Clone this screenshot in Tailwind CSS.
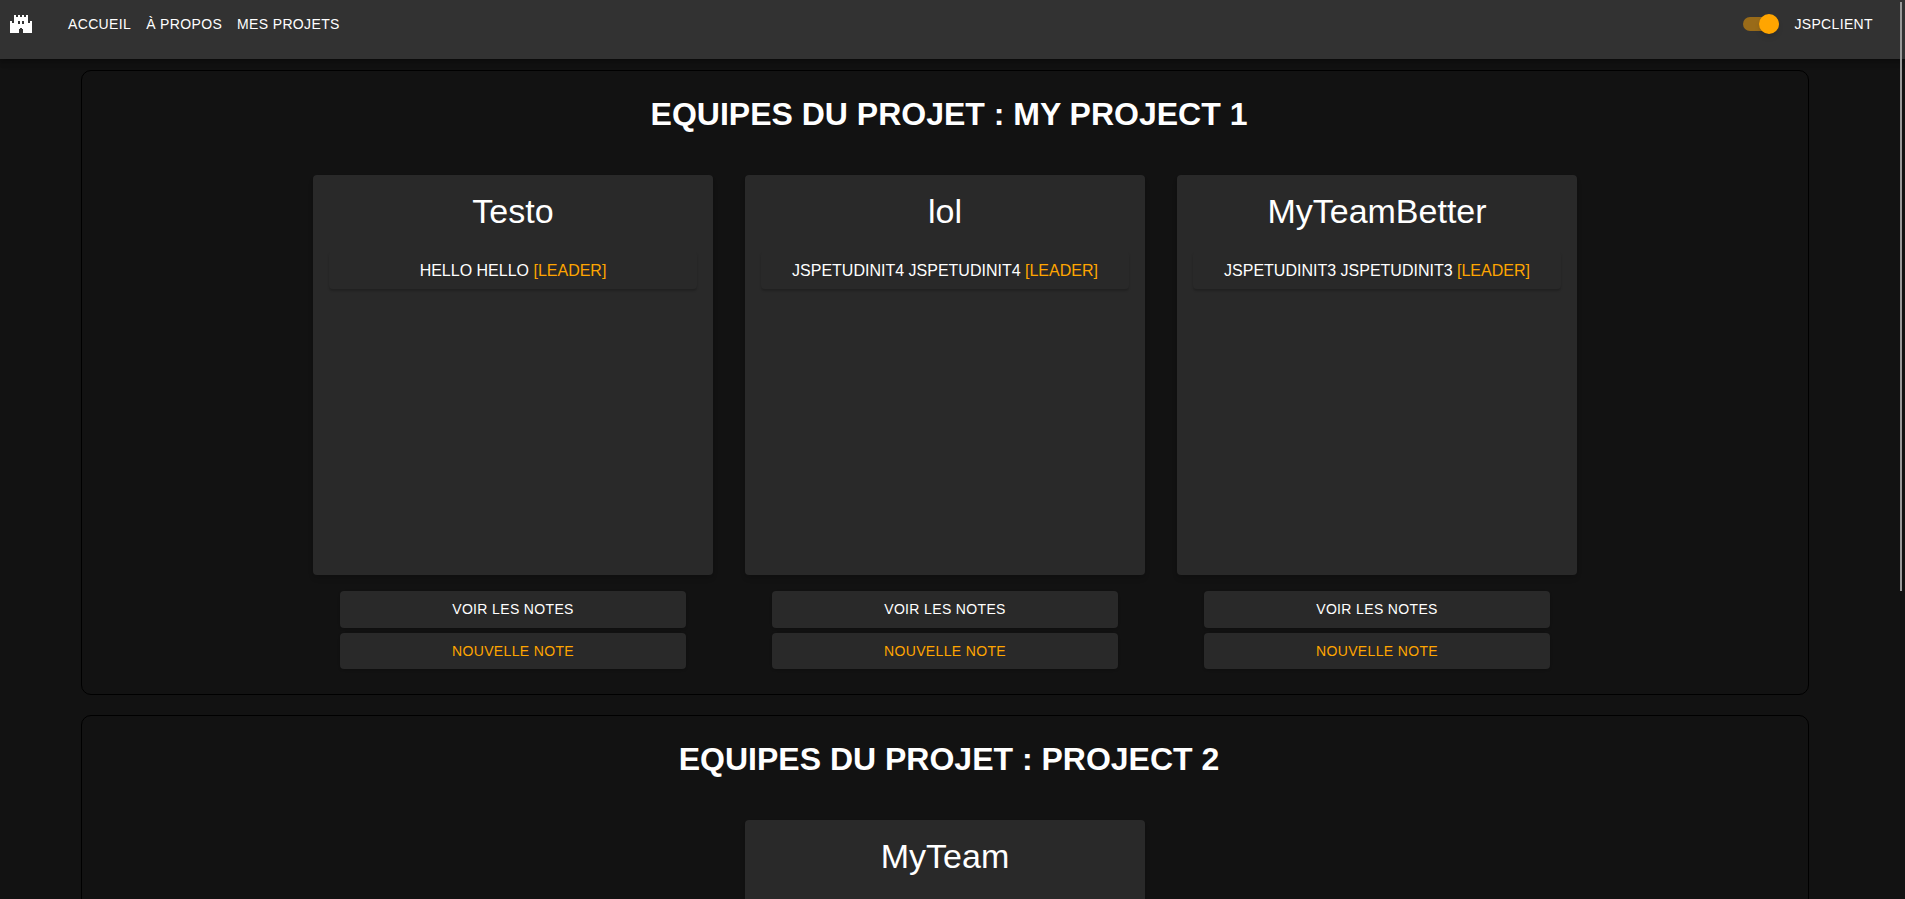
<!DOCTYPE html>
<html lang="fr">
<head>
<meta charset="utf-8">
<title>Mes projets</title>
<script src="https://cdn.jsdelivr.net/npm/@tailwindcss/browser@4"></script>
</head>
<body class="h-screen overflow-hidden bg-[#121212] font-['Liberation_Sans',Arial,sans-serif] text-white">
<header class="relative flex h-[59px] items-start bg-[#323232] pt-2 pr-8 pl-2 text-sm tracking-wide shadow-[0_2px_4px_-1px_rgba(0,0,0,0.2),0_4px_5px_rgba(0,0,0,0.14),0_1px_10px_rgba(0,0,0,0.12)]">
  <a href="#" aria-label="Accueil" class="flex h-8 items-center">
    <svg class="size-6" viewBox="0 0 24 24" fill="#fff" fill-rule="evenodd" shape-rendering="crispEdges"><path d="M2 9h2v2h2V3h2v2h2V3h2v2h2V3h2v2h2V3h2v8h2V9h2v12h-9v-4h-1v-1h-2v1h-1v4H2zM10 9v3h2V9zM14 9v3h2V9z"/></svg>
  </a>
  <nav class="ml-9 flex h-8 items-center gap-[15px]">
    <a href="#">ACCUEIL</a>
    <a href="#">À PROPOS</a>
    <a href="#">MES PROJETS</a>
  </nav>
  <div class="ml-auto flex h-8 items-center gap-[15px]">
    <input type="checkbox" role="switch" checked aria-label="Thème sombre" class="relative h-[14px] w-9 appearance-none rounded-full bg-[#996b19] after:absolute after:-top-[3px] after:right-0 after:size-5 after:rounded-full after:bg-[#ffa500] after:shadow-md after:content-['']">
    <button type="button" class="tracking-wide">JSPCLIENT</button>
  </div>
</header>
<main class="flex flex-col gap-5 pt-[11px] pr-24 pl-[81px]">
  <section class="rounded-[10px] border border-black pt-[25px] pb-[25px]">
    <h1 class="pl-2 text-center text-[32px] leading-9 font-bold">EQUIPES DU PROJET : MY PROJECT 1</h1>
    <div class="mt-[43px] flex justify-center gap-8">
      <article class="flex w-[400px] flex-col items-center">
        <div class="h-[400px] w-full rounded bg-[#292929] px-4 pt-4 text-center shadow-md">
          <h2 class="text-[34px] leading-10">Testo</h2>
          <p class="mt-5 rounded pt-2 pb-[6px] shadow-[0_2px_2px_rgba(0,0,0,0.2)]">HELLO HELLO <span class="text-[#ffa500]">[LEADER]</span></p>
        </div>
        <div class="mt-4 flex w-[346px] flex-col gap-[5px] text-sm">
          <button type="button" class="h-[37px] rounded bg-[#292929] pb-0.5 tracking-wide shadow">VOIR LES NOTES</button>
          <button type="button" class="h-9 rounded bg-[#292929] tracking-wide text-[#ffa500] shadow">NOUVELLE NOTE</button>
        </div>
      </article>
      <article class="flex w-[400px] flex-col items-center">
        <div class="h-[400px] w-full rounded bg-[#292929] px-4 pt-4 text-center shadow-md">
          <h2 class="text-[34px] leading-10">lol</h2>
          <p class="mt-5 rounded pt-2 pb-[6px] shadow-[0_2px_2px_rgba(0,0,0,0.2)]">JSPETUDINIT4 JSPETUDINIT4 <span class="text-[#ffa500]">[LEADER]</span></p>
        </div>
        <div class="mt-4 flex w-[346px] flex-col gap-[5px] text-sm">
          <button type="button" class="h-[37px] rounded bg-[#292929] pb-0.5 tracking-wide shadow">VOIR LES NOTES</button>
          <button type="button" class="h-9 rounded bg-[#292929] tracking-wide text-[#ffa500] shadow">NOUVELLE NOTE</button>
        </div>
      </article>
      <article class="flex w-[400px] flex-col items-center">
        <div class="h-[400px] w-full rounded bg-[#292929] px-4 pt-4 text-center shadow-md">
          <h2 class="text-[34px] leading-10">MyTeamBetter</h2>
          <p class="mt-5 rounded pt-2 pb-[6px] shadow-[0_2px_2px_rgba(0,0,0,0.2)]">JSPETUDINIT3 JSPETUDINIT3 <span class="text-[#ffa500]">[LEADER]</span></p>
        </div>
        <div class="mt-4 flex w-[346px] flex-col gap-[5px] text-sm">
          <button type="button" class="h-[37px] rounded bg-[#292929] pb-0.5 tracking-wide shadow">VOIR LES NOTES</button>
          <button type="button" class="h-9 rounded bg-[#292929] tracking-wide text-[#ffa500] shadow">NOUVELLE NOTE</button>
        </div>
      </article>
    </div>
  </section>
  <section class="rounded-[10px] border border-black pt-[25px] pb-[25px]">
    <h1 class="pl-2 text-center text-[32px] leading-9 font-bold">EQUIPES DU PROJET : PROJECT 2</h1>
    <div class="mt-[43px] flex justify-center gap-8">
      <article class="flex w-[400px] flex-col items-center">
        <div class="h-[400px] w-full rounded bg-[#292929] px-4 pt-4 text-center shadow-md">
          <h2 class="text-[34px] leading-10">MyTeam</h2>
        </div>
      </article>
    </div>
  </section>
</main>
<div class="fixed top-0.5 right-[3px] h-[589px] w-0.5 bg-[#999]"></div>
</body>
</html>
